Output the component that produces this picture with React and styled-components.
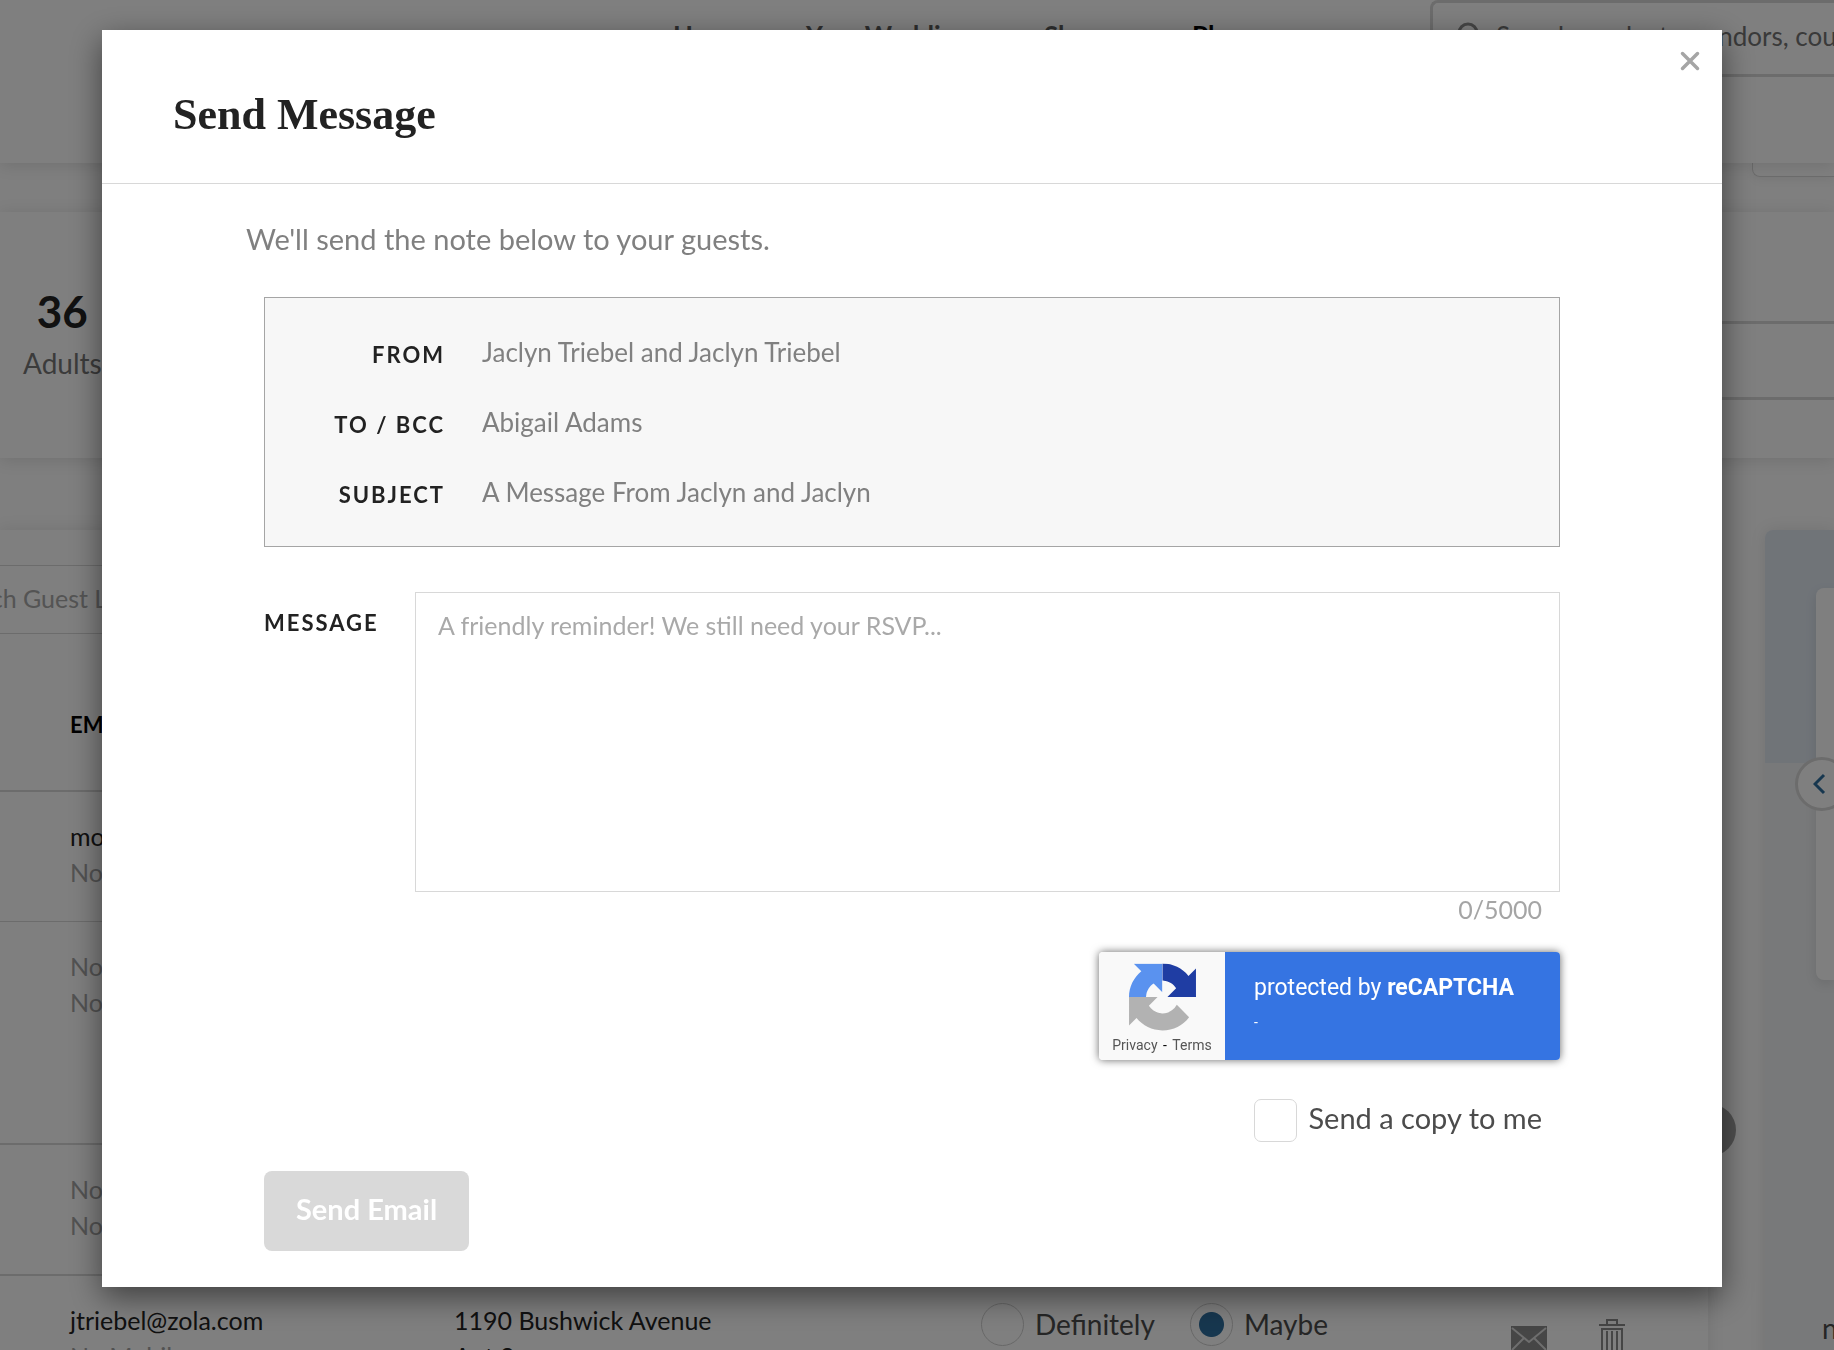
import React, { useState } from "react";
import styled, { createGlobalStyle } from "styled-components";

const GlobalStyle = createGlobalStyle`
    * {
        box-sizing: border-box;
    }

    body {
        margin: 0;
        background: #fff;
        color: #222;
        font-family: Lato, "Open Sans", sans-serif;
        font-size: 25px;
        line-height: 36px;
    }

    input, textarea, button {
        font-family: inherit;
        font-size: inherit;
        margin: 0;
    }
`;

/* ---------- guest list page ---------- */

const StyledPage = styled.div`
    height: 100vh;
    overflow: hidden;
    background: #fefefe;
`;

const StyledHeader = styled.header`
    position: relative;
    display: flex;
    justify-content: flex-end;
    align-items: flex-start;
    height: 163px;
    background: #fff;
    box-shadow: 0 2px 16px rgba(0, 0, 0, 0.12);
    font-size: 26px;

    nav {
        display: grid;
        grid-template-columns: 133px 238px 148px 238px;
        padding-top: 17px;
    }
`;

const NavLink = styled.a`
    color: ${props => (props.$active ? "#000" : "#5c5c5c")};
    font-weight: bold;
    text-decoration: none;
`;

const SiteSearch = styled.label`
    display: flex;
    align-items: center;
    gap: 16px;
    width: 404px;
    height: 77px;
    padding: 0 0 6px 22px;
    border: 3px solid #d8d8d8;
    border-right: none;
    border-radius: 8px 0 0 8px;

    input {
        flex: 1;
        min-width: 0;
        padding: 0;
        border: none;
        outline: none;
        background: none;

        &::placeholder {
            color: #747474;
            opacity: 1;
        }
    }
`;

const Toolbar = styled.div`
    display: flex;
    justify-content: flex-end;
    align-items: flex-start;
    height: 49px;
`;

const ToolbarTab = styled.div`
    width: 82px;
    height: 14px;
    border: 1px solid #d8d8d8;
    border-width: 0 0 1px 1px;
    border-radius: 0 0 0 8px;
    box-shadow: 0 4px 8px rgba(0, 0, 0, 0.05);
`;

const Summary = styled.section`
    display: flex;
    justify-content: space-between;
    height: 246px;
    margin-bottom: 72px;
    padding-left: 23px;
    background: #fff;
    box-shadow: 0 2px 16px rgba(0, 0, 0, 0.12);
`;

const Stat = styled.div`
    padding-top: 77px;
    text-align: center;

    strong {
        display: block;
        font-size: 44px;
        line-height: 44px;
    }

    span {
        display: block;
        padding-top: 10px;
        color: #777;
        font-size: 28px;
        line-height: 40px;
    }
`;

const SummaryList = styled.div`
    display: grid;
    grid-template-rows: 112px 76px 1fr;
    width: 240px;

    div {
        border-bottom: 3px solid #d8d8d8;
    }

    div:last-child {
        border-bottom: none;
    }
`;

const Columns = styled.div`
    display: flex;
    gap: 57px;
`;

const GuestCard = styled.main`
    flex: 1;
    min-width: 0;
    height: 900px;
    padding-top: 35px;
    background: #fff;
    box-shadow: 0 0 16px rgba(0, 0, 0, 0.1);
`;

const GuestSearch = styled.input`
    display: block;
    width: 480px;
    height: 69px;
    margin-left: -80px;
    padding: 0 22px 4px;
    border: 1px solid #d8d8d8;

    &::placeholder {
        color: #a8a8a8;
        opacity: 1;
    }
`;

const GuestTable = styled.table`
    width: 100%;
    table-layout: fixed;
    border-spacing: 0;

    th {
        height: 158px;
        padding: 26px 0 0;
        border-bottom: 2px solid #d8d8d8;
        color: #000;
        font-size: 22px;
        text-align: left;
    }

    td {
        padding: 26px 0 0;
        border-bottom: 2px solid #d8d8d8;
        vertical-align: top;
    }

    th:first-child, td:first-child {
        padding-left: 70px;
    }

    tbody tr:first-child td {
        border-bottom-width: 1px;
    }
`;

const GuestRow = styled.tr`
    height: ${props => props.$height}px;
`;

const Line = styled.div`
    color: ${props => (props.$muted ? "#a5a5a5" : "#222")};
`;

const RsvpOptions = styled.div`
    display: flex;
    gap: 35px;

    label {
        display: flex;
        align-items: center;
        gap: 11px;
        color: #4c4c4c;
        font-size: 28px;
        line-height: 44px;
    }

    input {
        width: 43px;
        height: 43px;
        appearance: none;
        border: 1px solid #cfcfcf;
        border-radius: 50%;
    }

    input:checked {
        background: radial-gradient(circle, #2e6e9e 12px, transparent 13px);
    }
`;

const RowActions = styled.div`
    display: flex;
    align-items: flex-end;
    gap: 52px;
    padding-top: 17px;

    button {
        display: flex;
        padding: 0;
        border: none;
        background: none;
    }
`;

const SidePanel = styled.aside`
    position: relative;
    flex: 0 0 69px;
    min-width: 0;
    height: 900px;
    padding: 58px 0 0 51px;
    border-radius: 8px 0 0 0;
    background: linear-gradient(#e0e8f1 233px, #f0f2f4 233px);
    box-shadow: 0 0 16px rgba(0, 0, 0, 0.1);

    p {
        margin: 328px 0 0 6px;
        color: #4c4c4c;
        font-size: 28px;
        line-height: 40px;
    }
`;

const SideCard = styled.div`
    height: 392px;
    border-radius: 8px 0 0 8px;
    background: #fff;
    box-shadow: 0 4px 12px rgba(0, 0, 0, 0.1);
`;

const PreviousButton = styled.button`
    position: absolute;
    top: 227px;
    left: 30px;
    display: flex;
    align-items: center;
    justify-content: center;
    width: 54px;
    height: 54px;
    padding: 0 6px 0 0;
    border: 3px solid #d8d8d8;
    border-radius: 50%;
    background: #fff;
`;

const HelpBubble = styled.button`
    position: fixed;
    right: 98px;
    bottom: 194px;
    width: 52px;
    height: 52px;
    border: none;
    border-radius: 50%;
    background: #a0a0a0;
`;

/* ---------- send message modal ---------- */

const Overlay = styled.div`
    position: fixed;
    inset: 0;
    padding: 30px 112px 30px 102px;
    background: rgba(0, 0, 0, 0.5);
`;

const Modal = styled.div`
    position: relative;
    background: #fff;
    box-shadow: 0 10px 30px rgba(0, 0, 0, 0.5);
`;

const CloseButton = styled.button`
    position: absolute;
    top: 20px;
    right: 21px;
    display: flex;
    padding: 0;
    border: none;
    background: none;
    cursor: pointer;
`;

const ModalHeader = styled.div`
    padding: 57px 71px 40px;
    border-bottom: 1px solid #d8d8d8;

    h1 {
        margin: 0;
        font-family: "Liberation Serif", "Times New Roman", serif;
        font-size: 44px;
        font-weight: bold;
        line-height: 56px;
    }
`;

const ModalBody = styled.div`
    padding: 35px 144px 36px;

    form {
        padding: 0 18px;
    }
`;

const Intro = styled.p`
    margin: 0 0 38px;
    color: #808080;
    font-size: 29px;
    line-height: 40px;
`;

const Details = styled.dl`
    margin: 0 0 45px;
    padding: 19px 0;
    border: 1px solid #a5a5a5;
    background: #f7f7f7;

    div {
        display: grid;
        grid-template-columns: 180px 1fr;
        align-items: center;
        column-gap: 37px;
        height: 70px;
    }

    dt {
        padding-top: 6px;
        font-size: 22px;
        font-weight: bold;
        letter-spacing: 2px;
        text-align: right;
    }

    dd {
        margin: 0;
        color: #808080;
        font-size: 26px;
    }
`;

const MessageField = styled.div`
    display: flex;

    label {
        width: 151px;
        font-size: 22px;
        font-weight: bold;
        letter-spacing: 2px;
        line-height: 62px;
    }

    textarea {
        flex: 1;
        height: 300px;
        padding: 16px 22px;
        border: 1px solid #d8d8d8;
        border-radius: 0;
        color: #222;
        line-height: 32px;
        resize: none;
        outline: none;

        &::placeholder {
            color: #a9a9a9;
            opacity: 1;
        }
    }
`;

const Counter = styled.div`
    margin-bottom: 26px;
    padding-right: 18px;
    color: #a5a5a5;
    line-height: 34px;
    text-align: right;
`;

const Recaptcha = styled.div`
    display: flex;
    width: 461px;
    height: 108px;
    margin: 0 0 39px auto;
    border-radius: 4px;
    overflow: hidden;
    box-shadow: 0 0 8px rgba(0, 0, 0, 0.6);
    font-family: Roboto, sans-serif;
`;

const RecaptchaLogo = styled.div`
    display: flex;
    flex-direction: column;
    align-items: center;
    width: 126px;
    padding-top: 11px;
    background: #f9f9f9;
    color: #000;
    font-size: 14px;
    line-height: 28px;

    a {
        color: #555;
        text-decoration: none;
    }

    span {
        padding: 0 2px;
    }
`;

const RecaptchaText = styled.div`
    flex: 1;
    padding: 18px 0 0 29px;
    background: #3574e2;
    color: #fff;
    font-size: 23px;

    small {
        display: block;
        font-size: 14px;
        line-height: 32px;
    }
`;

const CopyField = styled.label`
    display: flex;
    justify-content: flex-end;
    align-items: center;
    gap: 11px;
    margin-bottom: 29px;
    padding-right: 18px;
    color: #4c4c4c;
    font-size: 29px;
    line-height: 36px;

    input {
        width: 43px;
        height: 43px;
        appearance: none;
        border: 1px solid #d8d8d8;
        border-radius: 7px;
        background: #fff;
    }

    input:checked {
        background: #2e6e9e;
    }

    span {
        padding-bottom: 6px;
    }
`;

const SendButton = styled.button`
    height: 80px;
    padding: 0 32px 6px;
    border: none;
    border-radius: 8px;
    background: #d9d9d9;
    color: #fff;
    font-size: 29px;
    font-weight: bold;
`;

const SearchIcon = () => (
    <svg width="25" height="28" viewBox="0 0 25 28" fill="none" stroke="#8c8c8c" strokeWidth="3">
        <circle cx="13" cy="11" r="9" />
        <path d="M18 18l6 7" />
    </svg>
);

const MailIcon = () => (
    <svg width="36" height="28" viewBox="0 0 36 28">
        <path d="M0 0h36v28H0z" fill="#8c8c8c" />
        <path d="M1 2l17 14L35 2M1 24l12-12M35 24L23 12" fill="none" stroke="#dcdcdc" strokeWidth="2" />
    </svg>
);

const TrashIcon = () => (
    <svg width="26" height="35" viewBox="0 0 26 35" fill="none" stroke="#8c8c8c" strokeWidth="2">
        <path d="M0 6h26" />
        <path d="M8 5V1h10v4M3 10h20v23H3zM8 12v19M13 12v19M18 12v19" />
    </svg>
);

const RecaptchaIcon = () => (
    <svg width="67" height="68" viewBox="0 0 64 64">
        <clipPath id="right-half">
            <rect x="32" y="0" width="32" height="32" />
        </clipPath>
        <clipPath id="top-half">
            <rect x="0" y="0" width="32" height="32" />
        </clipPath>
        <path
            clipPath="url(#right-half)"
            fill="#1f3da3"
            d="M64 31.955l-.033-1.37V4.687l-7.16 7.16C50.948 4.674 42.033.093 32.05.093c-10.4 0-19.622 4.96-25.458 12.64l11.736 11.86a15.55 15.55 0 0 1 4.754-5.334c2.05-1.6 4.952-2.906 8.968-2.906.485 0 .86.057 1.135.163 4.976.393 9.288 3.14 11.828 7.124l-8.307 8.307L64 31.953"
        />
        <path
            clipPath="url(#top-half)"
            fill="#5a92ef"
            d="M31.862.094l-1.37.033H4.594l7.16 7.16C4.58 13.147 0 22.06 0 32.046c0 10.4 4.96 19.622 12.64 25.458L24.5 45.768a15.55 15.55 0 0 1-5.334-4.754c-1.6-2.05-2.906-4.952-2.906-8.968 0-.485.057-.86.163-1.135.393-4.976 3.14-9.288 7.124-11.828l8.307 8.307L31.86.095"
        />
        <path
            fill="#b2b2b2"
            d="M.001 32.045l.033 1.37v25.898l7.16-7.16c5.86 7.173 14.774 11.754 24.76 11.754 10.4 0 19.622-4.96 25.458-12.64l-11.736-11.86a15.55 15.55 0 0 1-4.754 5.334c-2.05 1.6-4.952 2.906-8.968 2.906-.485 0-.86-.057-1.135-.163-4.976-.393-9.288-3.14-11.828-7.124l8.307-8.307c-10.522.04-22.4.066-27.295-.005"
        />
    </svg>
);

const guests = [
    { height: 130, email: "molly@zola.com" },
    { height: 223 },
    { height: 131 },
    { height: 131, email: "jtriebel@zola.com", address: ["1190 Bushwick Avenue", "Apt 2"], rsvp: true },
];

function GuestListPage() {
    return (
        <StyledPage>
            <StyledHeader>
                <nav>
                    <NavLink href="#home">Home</NavLink>
                    <NavLink href="#wedding">Your Wedding</NavLink>
                    <NavLink href="#shop">Shop</NavLink>
                    <NavLink href="#plan" $active>Plan</NavLink>
                </nav>
                <SiteSearch>
                    <SearchIcon />
                    <input type="text" aria-label="Search" placeholder="Search products, vendors, couples" />
                </SiteSearch>
            </StyledHeader>
            <Toolbar>
                <ToolbarTab />
            </Toolbar>
            <Summary>
                <Stat>
                    <strong>36</strong>
                    <span>Adults</span>
                </Stat>
                <SummaryList>
                    <div />
                    <div />
                    <div />
                </SummaryList>
            </Summary>
            <Columns>
                <GuestCard>
                    <GuestSearch type="text" aria-label="Search Guest List" placeholder="Search Guest List" />
                    <GuestTable>
                        <colgroup>
                            <col width="454" />
                            <col width="527" />
                            <col width="530" />
                            <col />
                        </colgroup>
                        <thead>
                            <tr>
                                <th>EMAIL</th>
                                <th />
                                <th />
                                <th />
                            </tr>
                        </thead>
                        <tbody>
                            {guests.map((guest, i) => (
                                <GuestRow key={i} $height={guest.height}>
                                    <td>
                                        <Line $muted={!guest.email}>{guest.email || "No Email"}</Line>
                                        <Line $muted>No Mobile</Line>
                                    </td>
                                    <td>
                                        {guest.address && guest.address.map(line => <Line key={line}>{line}</Line>)}
                                    </td>
                                    <td>
                                        {guest.rsvp && (
                                            <RsvpOptions>
                                                <label>
                                                    <input type="radio" name="rsvp" />
                                                    Definitely
                                                </label>
                                                <label>
                                                    <input type="radio" name="rsvp" defaultChecked />
                                                    Maybe
                                                </label>
                                            </RsvpOptions>
                                        )}
                                    </td>
                                    <td>
                                        {guest.rsvp && (
                                            <RowActions>
                                                <button type="button" aria-label="Email guest"><MailIcon /></button>
                                                <button type="button" aria-label="Delete guest"><TrashIcon /></button>
                                            </RowActions>
                                        )}
                                    </td>
                                </GuestRow>
                            ))}
                        </tbody>
                    </GuestTable>
                </GuestCard>
                <SidePanel>
                    <SideCard />
                    <PreviousButton type="button" aria-label="Previous">
                        <svg width="13" height="22" viewBox="0 0 13 22" fill="none" stroke="#2e6e9e" strokeWidth="3">
                            <path d="M11 2L2 11l9 9" />
                        </svg>
                    </PreviousButton>
                    <p>n</p>
                </SidePanel>
            </Columns>
            <HelpBubble type="button" aria-label="Help" />
        </StyledPage>
    );
}

function SendMessageModal() {
    const [message, setMessage] = useState("");

    return (
        <Overlay>
            <Modal role="dialog" aria-labelledby="modal-title">
                <CloseButton type="button" aria-label="Close">
                    <svg width="22" height="22" viewBox="0 0 22 22" stroke="#a5a5a5" strokeWidth="3.5" strokeLinecap="round">
                        <path d="M3.5 3.5l15 15M18.5 3.5l-15 15" />
                    </svg>
                </CloseButton>
                <ModalHeader>
                    <h1 id="modal-title">Send Message</h1>
                </ModalHeader>
                <ModalBody>
                    <Intro>We'll send the note below to your guests.</Intro>
                    <form onSubmit={e => e.preventDefault()}>
                        <Details>
                            <div>
                                <dt>FROM</dt>
                                <dd>Jaclyn Triebel and Jaclyn Triebel</dd>
                            </div>
                            <div>
                                <dt>TO / BCC</dt>
                                <dd>Abigail Adams</dd>
                            </div>
                            <div>
                                <dt>SUBJECT</dt>
                                <dd>A Message From Jaclyn and Jaclyn</dd>
                            </div>
                        </Details>
                        <MessageField>
                            <label htmlFor="message">MESSAGE</label>
                            <textarea
                                id="message"
                                maxLength={5000}
                                placeholder="A friendly reminder! We still need your RSVP..."
                                value={message}
                                onChange={e => setMessage(e.target.value)}
                            />
                        </MessageField>
                        <Counter>{message.length}/5000</Counter>
                        <Recaptcha>
                            <RecaptchaLogo>
                                <RecaptchaIcon />
                                <div>
                                    <a href="#privacy">Privacy</a>
                                    <span> - </span>
                                    <a href="#terms">Terms</a>
                                </div>
                            </RecaptchaLogo>
                            <RecaptchaText>
                                protected by <strong>reCAPTCHA</strong>
                                <small>-</small>
                            </RecaptchaText>
                        </Recaptcha>
                        <CopyField>
                            <input type="checkbox" />
                            <span>Send a copy to me</span>
                        </CopyField>
                        <SendButton type="submit" disabled={!message}>Send Email</SendButton>
                    </form>
                </ModalBody>
            </Modal>
        </Overlay>
    );
}

export default function App() {
    return (
        <>
            <GlobalStyle />
            <GuestListPage />
            <SendMessageModal />
        </>
    );
}
